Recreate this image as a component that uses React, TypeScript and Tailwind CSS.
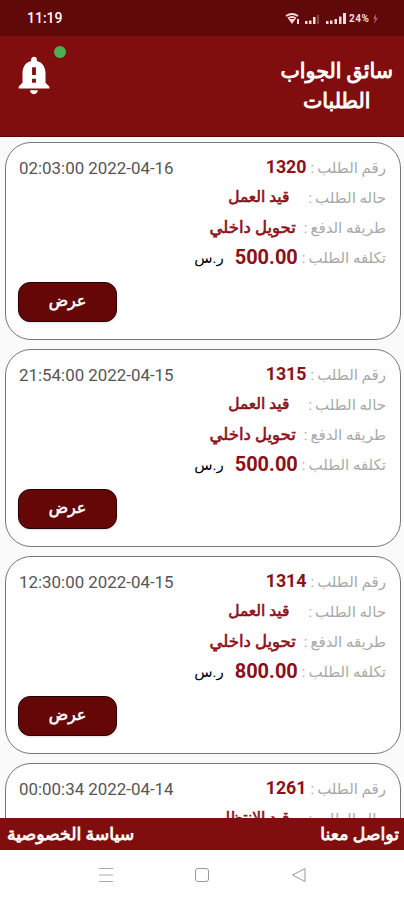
import { MdNotificationImportant } from "react-icons/md";

const orders = [
  { id: "1320", date: "02:03:00 2022-04-16", status: "قيد العمل", cost: "500.00" },
  { id: "1315", date: "21:54:00 2022-04-15", status: "قيد العمل", cost: "500.00" },
  { id: "1314", date: "12:30:00 2022-04-15", status: "قيد العمل", cost: "800.00" },
  { id: "1261", date: "00:00:34 2022-04-14", status: "قيد الانتظار", cost: "500.00" },
];

const StatusBar = () => (
  <div dir="ltr" className="flex h-9 shrink-0 items-center justify-between bg-[#5f0909] pl-[27px] pr-[25px] text-white">
    <span className="text-[14px] font-medium">11:19</span>
    <svg width="94" height="16" viewBox="0 0 94 16" className="mt-[2px]">
      <g fill="none" stroke="#f3dcdc" strokeWidth="1.8">
        <path d="M1 5q6-4 12 0M3 7.500q4-3 8 0" />
      </g>
      <path d="M3.500 8h7l-3.500 5zM12 8h2v5h-2z" fill="#f3dcdc" />
      <path d="M20 10h2.500v3h-2.500zM24 9.500h2.500v3.500h-2.500zM28 6h2.500v7h-2.500z" fill="#f3dcdc" />
      <path d="M32 4h2v9h-2z" fill="#8d4545" />
      <path d="M41 10h2.500v3h-2.500zM45 9.500h2.500v3.500h-2.500zM49.500 8h2.500v5h-2.500zM54 5.500h2.500v7.500h-2.500zM58 2h3v11h-3z" fill="#f3dcdc" />
      <text x="64" y="11" fontSize="10" fontWeight="700" fill="#f3dcdc" textLength="20">24%</text>
      <path d="M91 3l-3 5h2l-1 5 4-6h-2z" fill="#a65d5d" />
    </svg>
  </div>
);

const Row = ({ label, children }: { label: string; children: React.ReactNode }) => (
  <div className="flex h-[30px] items-center whitespace-pre">
    <span className="text-[#a9a9a9]">{label}</span>
    <span className="mr-[3px] text-[#a9a9a9]">:</span>
    {children}
  </div>
);

const OrderCard = ({ order }: { order: (typeof orders)[number] }) => (
  <div className="relative h-[198px] shrink-0 rounded-[26px] border border-[#777] bg-white pr-[14px] pt-[10px] text-[15px]">
    <Row label="رقم الطلب">
      <span className="mr-[4px] pb-[2px] text-[17.8px] font-bold text-[#8b1018]">{order.id}</span>
    </Row>
    <Row label="حاله الطلب">
      <span className="mr-[19px] text-[15.5px] text-[#8b1018] [-webkit-text-stroke:0.6px]">{order.status}</span>
    </Row>
    <Row label="طريقه الدفع">
      <span className="mr-[8px] text-[16.5px] text-[#8b1018] [-webkit-text-stroke:0.6px]">تحويل داخلي</span>
    </Row>
    <Row label="تكلفه الطلب">
      <span className="mr-[4px] pb-[2px] text-[20px] font-bold text-[#8b1018]">{order.cost}</span>
      <span className="mr-[11px] text-black">ر.س</span>
    </Row>
    <span dir="ltr" className="absolute left-[13px] top-[13px] text-[16.9px] text-[#555]">
      {order.date}
    </span>
    <button className="absolute bottom-[17px] left-[12px] h-10 w-[99px] rounded-xl border border-[#250303] bg-[#650707] pb-[2px] text-[16px] text-white shadow-sm [-webkit-text-stroke:0.6px]">
      عرض
    </button>
  </div>
);

export default function App() {
  return (
    <div
      dir="rtl"
      className="flex h-[900px] w-[404px] flex-col overflow-hidden bg-[#fafafa] font-['Roboto','DejaVu_Sans',sans-serif]"
    >
      <StatusBar />
      <header className="flex h-[101px] shrink-0 items-start justify-between border-b border-[#5f0505] bg-[#800e0e] pr-[11px] text-white">
        <h1 className="pt-[20px] text-center text-[20.6px] leading-[30px] [-webkit-text-stroke:0.9px]">
          سائق الجواب
          <br />
          الطلبات
        </h1>
        <div className="relative h-full w-20">
          <MdNotificationImportant className="absolute left-[11px] top-[16px] h-[46px] w-[46px]" />
          <span className="absolute left-[54px] top-[10px] size-3 rounded-full bg-[#4caf50]" />
        </div>
      </header>
      <main className="flex min-h-0 flex-1 flex-col gap-[9px] overflow-hidden pl-[5px] pr-[3px] pt-[5px]">
        {orders.map((order) => (
          <OrderCard key={order.id} order={order} />
        ))}
      </main>
      <footer className="flex h-8 shrink-0 items-center justify-between bg-[#800e0e] pl-[7px] pr-[5px] pt-[2px] text-[17.3px] text-white [-webkit-text-stroke:0.8px]">
        <span>تواصل معنا</span>
        <span>سياسة الخصوصية</span>
      </footer>
      <nav dir="ltr" className="flex h-[50px] shrink-0 items-center justify-between bg-white px-[98px]">
        <svg width="16" height="16" viewBox="0 0 16 16" stroke="#aaa">
          <path d="M1 1.500h14M1 8h14M1 14.500h14" />
        </svg>
        <svg width="16" height="16" viewBox="0 0 16 16" fill="none" stroke="#999">
          <rect x="1.500" y="1.500" width="13" height="13" rx="2.500" />
        </svg>
        <svg width="16" height="16" viewBox="0 0 16 16" fill="none" stroke="#999" strokeLinejoin="round">
          <path d="M15 1.500v13L2.500 8z" />
        </svg>
      </nav>
    </div>
  );
}
